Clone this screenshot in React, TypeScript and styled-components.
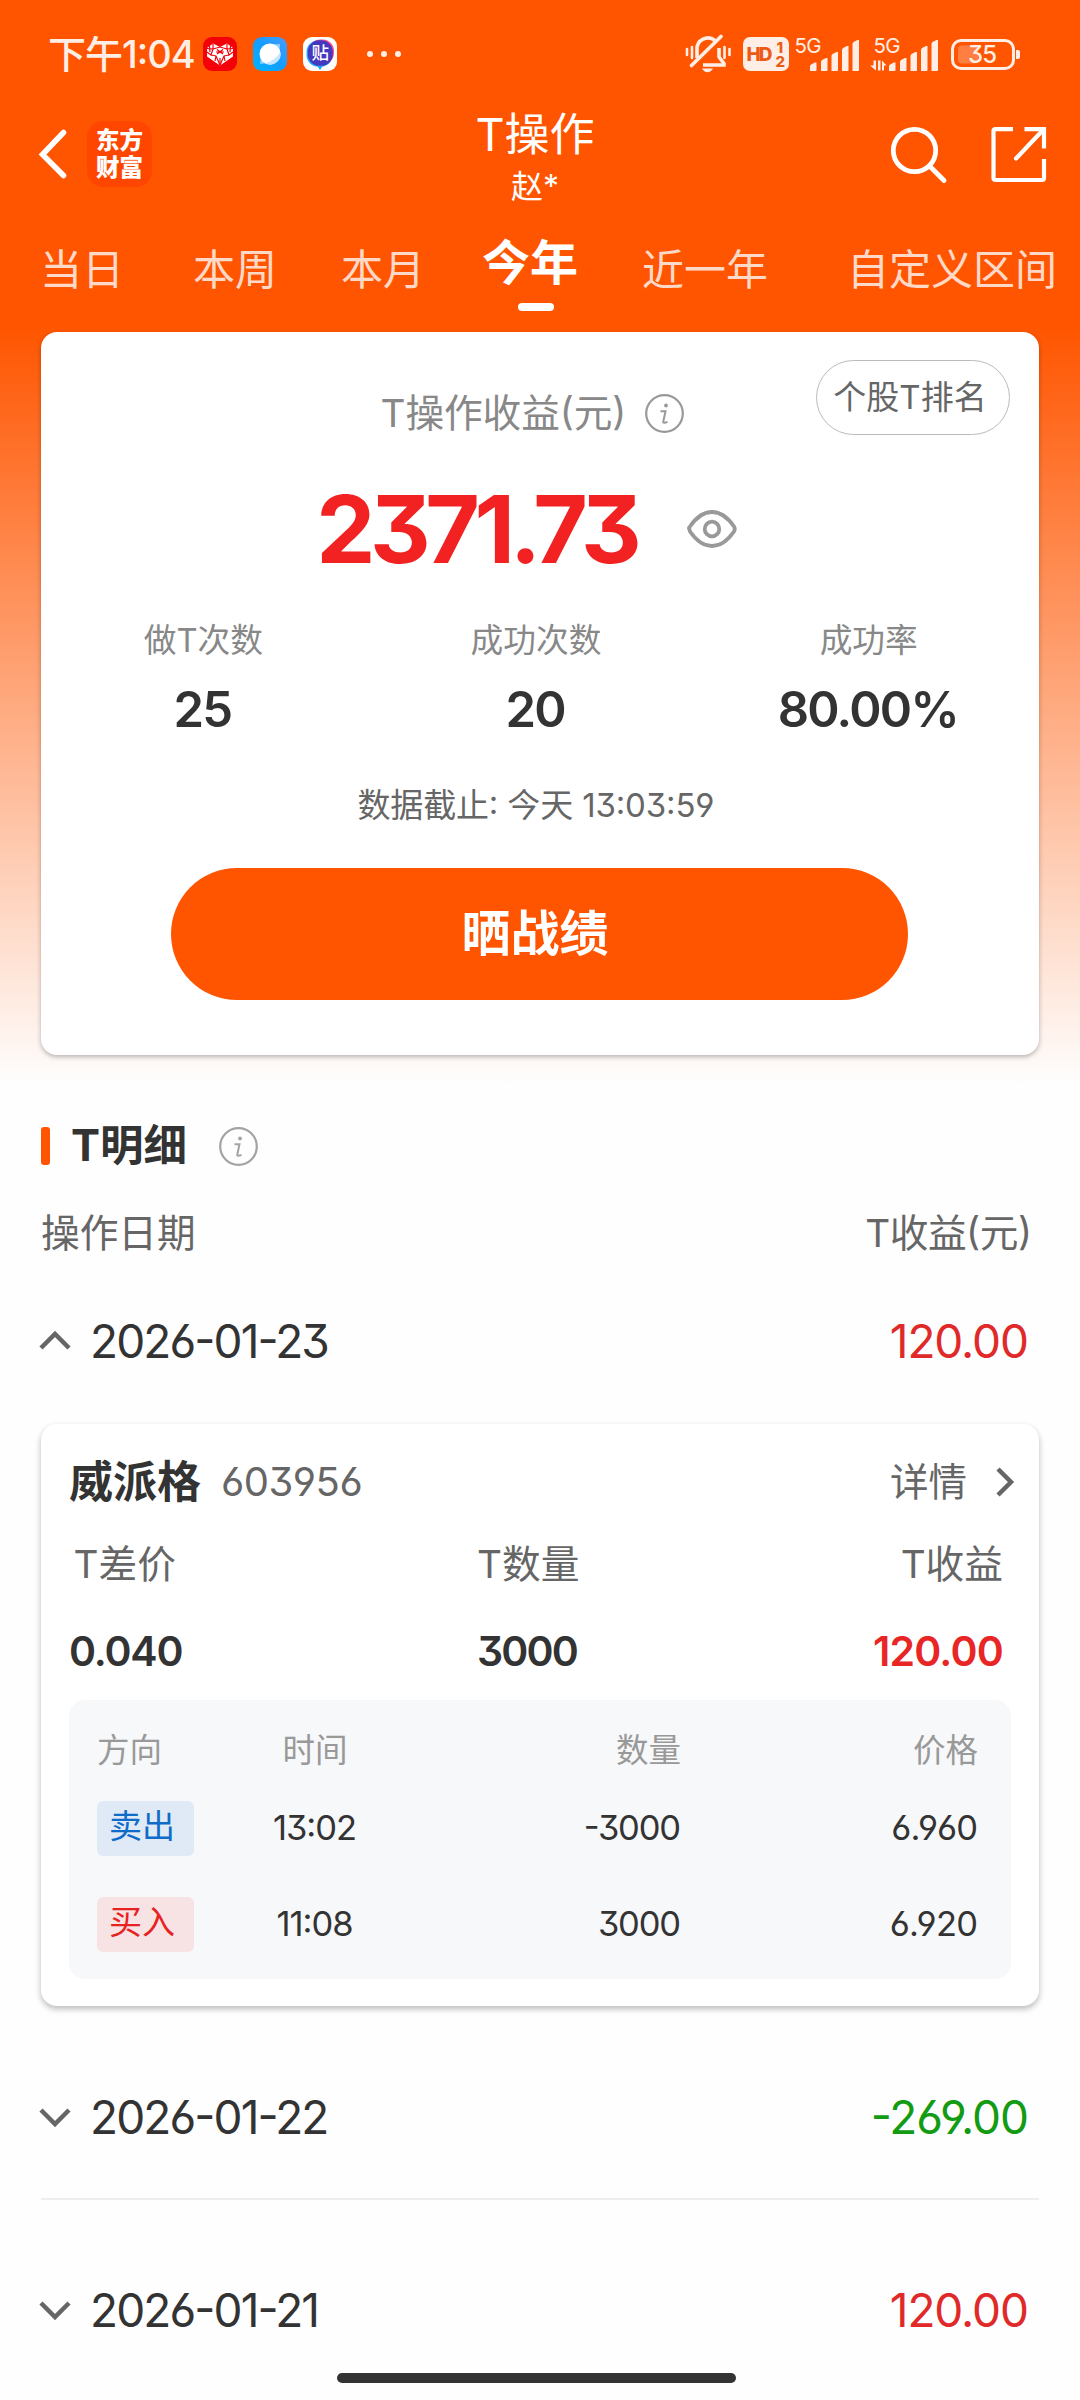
import React from 'react';
import styled, { createGlobalStyle } from 'styled-components';

const GlobalStyle = createGlobalStyle`
  *, *::before, *::after { box-sizing: border-box; }
  body {
    margin: 0;
    background: #fefefe;
    font-family: Inter, "Noto Sans CJK SC", sans-serif;
    font-feature-settings: "cv03", "cv04", "cv09", "case";
    color: #333;
  }
  svg { display: block; flex: none; overflow: visible; }
`;

const Page = styled.div`
  width: 1080px;
  height: 2400px;
  overflow: hidden;
  display: flex;
  flex-direction: column;
  background: linear-gradient(#ff5500 0, #ff5500 325px, #fefefe 1085px);
  & > * { flex-shrink: 0; }
`;

interface LabelProps {
  $size: number;
  $weight?: number;
  $color?: string;
  $track?: number;
}

const Label = styled.span<LabelProps>`
  font-size: ${p => p.$size}px;
  font-weight: ${p => p.$weight ?? 400};
  color: ${p => p.$color ?? 'inherit'};
  letter-spacing: ${p => p.$track ?? 0}px;
  margin-right: ${p => -(p.$track ?? 0)}px;
  line-height: 1;
  white-space: nowrap;
`;

/* ---------- status bar ---------- */

const StatusBar = styled.div`
  height: 108px;
  padding: 0 60px 0 48px;
  display: flex;
  align-items: center;
  justify-content: space-between;
`;

const StatusGroup = styled.div`
  display: flex;
  align-items: center;
`;

const AppIcons = styled.div`
  display: flex;
  align-items: center;
  gap: 16px;
  margin-left: 7px;
`;

const STATUS = '#ffeee5';

const ShoppingIcon = () => (
  <svg width="34" height="34" viewBox="0 0 34 34">
    <rect width="34" height="34" rx="9" fill="#f40009" />
    <path d="M4 11 10 6.5 17 10 24 6.5 30 11V19.500L17 28.500 4 19.500Z" fill="#fff" />
    <g stroke="#f40009" strokeWidth="1.2" fill="none">
      <path d="M4 11.500 10 12 10 7M10 12 17 10 24 12 24 7M24 12 30 11.500M10 12 8 18 4 15M24 12 26 18 30 15M8 18 13 19 17 28 21 19 26 18M13 19 12 24M21 19 22 24" />
      <path d="M14 12.500 20 17M20 12.500 14 17M13 15H21" />
      <path d="M17 21V28M6.500 9 7 15M27.500 9 27 15" />
    </g>
  </svg>
);

const BrowserIcon = () => (
  <svg width="34" height="34" viewBox="0 0 34 34">
    <defs>
      <linearGradient id="sky" x1="0" y1="1" x2="1" y2="0">
        <stop offset="0" stopColor="#00b4ff" />
        <stop offset="0.5" stopColor="#129dff" />
        <stop offset="1" stopColor="#4b9bff" />
      </linearGradient>
    </defs>
    <rect width="34" height="34" rx="9" fill="url(#sky)" />
    <path d="M20 7.500 27 7 26.500 14ZM8 20 7 27 14 26Z" fill="#8fd0ff" />
    <circle cx="17" cy="17" r="10.500" fill="#fff" />
    <path d="M27.300 14.500A10.500 10.500 0 0 1 12 26.200C18 25 25 20 27.300 14.500Z" fill="#c5e4ff" />
  </svg>
);

const ForumIcon = () => (
  <svg width="34" height="34" viewBox="0 0 34 34">
    <rect width="34" height="34" rx="9" fill="#fff" />
    <path d="M17 33 13 27H21Z" fill="#1d9cf5" />
    <rect x="3.500" y="3.500" width="26" height="26" rx="11.500" fill="#22b0fa" />
    <rect x="6" y="2.500" width="25" height="25" rx="11.500" fill="#ff4d8a" />
    <rect x="4.800" y="3.300" width="25" height="25.500" rx="11.500" fill="#4438c0" />
    <text x="17.300" y="22" textAnchor="middle" fontSize="17.500" fontWeight="500" fill="#fff" fontFamily="Noto Sans CJK SC, sans-serif">贴</text>
  </svg>
);

const MoreDots = styled.div`
  display: flex;
  gap: 8px;
  margin-left: 30px;
  &::before, &::after { content: ''; }
  &::before, &::after, & > i {
    width: 6px;
    height: 6px;
    border-radius: 50%;
    background: ${STATUS};
  }
`;

const MutedBell = () => (
  <svg width="46" height="40" viewBox="0 0 46 40" fill="none" stroke={STATUS} strokeWidth="3.200" strokeLinecap="round">
    <path d="M2 15V21M7 13V24M39.500 13V24M44.500 15V21" strokeWidth="2.600" />
    <path d="M12 24V15.500A11 11 0 0 1 30 6.500" strokeWidth="3.600" strokeLinecap="butt" />
    <path d="M34 14V23L39 29.500V31H18" strokeWidth="3.600" strokeLinecap="butt" />
    <path d="M36 2.500 6.500 31.500" strokeWidth="3.600" />
    <path d="M17 34.500H28Q26 38.200 22.500 38.200T17 34.500Z" fill={STATUS} stroke="none" />
  </svg>
);

const HdBadge = () => (
  <svg width="46" height="34" viewBox="0 0 46 34">
    <rect width="46" height="34" rx="7" fill={STATUS} />
    <g fill="#ec5a17" fontFamily="Inter, sans-serif" fontWeight="800">
      <text x="3.500" y="24" fontSize="19" textLength="26">HD</text>
      <text x="33.500" y="15.500" fontSize="15">1</text>
      <text x="32.500" y="30" fontSize="15">2</text>
    </g>
  </svg>
);

const Signal = ({ data }: { data?: boolean }) => (
  <svg width="66" height="36" viewBox="0 0 66 36" fill={STATUS}>
    <text x="-0.500" y="17" fontSize="20.500" letterSpacing="-0.700" fontFamily="Inter, sans-serif">5G</text>
    {[[15, 26.500], [26, 22], [36.500, 16], [47, 10], [57.500, 4]].map(([x, top]) => (
      <path key={x} d={`M${x} 35V${top + 4}Q${x} ${top + 2.5} ${x + 1.5} ${top + 1.8}L${x + 5} ${top}H${x + 6.5}V34Q${x + 6.5} 35 ${x + 5.5} 35Z`} />
    ))}
    {data && <path d="M-0.500 24.500H2V34.500L-4 29.500H-0.500ZM4 24.500H6.500V34.500H4ZM8 24.500 12.500 29.500H10V34.500H8Z" />}
  </svg>
);

const Battery = () => (
  <svg width="70" height="32" viewBox="0 0 70 32">
    <rect x="1.500" y="2.500" width="61" height="28" rx="8.500" fill="none" stroke={STATUS} strokeWidth="3" />
    <rect x="7" y="7.500" width="20" height="18" rx="4" fill="#ff7e42" />
    <path d="M65 12H67Q69 12 69 14V19Q69 21 67 21H65Z" fill={STATUS} />
    <text x="31" y="25" textAnchor="middle" fontSize="24" fontWeight="500" letterSpacing="-1" fill={STATUS} fontFamily="Inter, sans-serif">35</text>
  </svg>
);

const StatusIcons = styled.div`
  display: flex;
  align-items: center;
  width: 335px;
  & > :nth-child(2) { margin-left: 12px; }
  & > :nth-child(3) { margin-left: 6px; }
  & > :nth-child(4) { margin-left: 13px; }
  & > :nth-child(5) { margin-left: 11px; }
`;

/* ---------- header ---------- */

const Header = styled.header`
  height: 98px;
  display: grid;
  grid-template-columns: 437px 196px 1fr;
  align-items: center;
  color: #fff;
`;

const HeaderLeft = styled.div`
  display: flex;
  align-items: center;
  gap: 19px;
  padding: 0 0 6px 38px;
`;

const Brand = styled.div`
  width: 65px;
  height: 66px;
  border-radius: 16px;
  background: #ff4600;
  display: grid;
  place-content: center;
  font-size: 23.500px;
  line-height: 27.500px;
  font-weight: 900;
  text-align: center;
`;

const HeaderTitle = styled.div`
  display: flex;
  flex-direction: column;
  align-items: center;
  gap: 14px;
`;

const HolderName = styled(Label)`
  font-feature-settings: normal;
`;

const HeaderActions = styled.div`
  display: flex;
  justify-content: flex-end;
  align-items: center;
  gap: 44px;
  padding: 0 33px 6px 0;
`;

/* ---------- period tabs ---------- */

const Tabs = styled.nav`
  height: 120px;
  padding-left: 40px;
  display: flex;
  align-items: flex-start;
`;

const Tab = styled.div<{ $gap: number; $active?: boolean }>`
  margin-left: ${p => p.$gap}px;
  padding-top: ${p => (p.$active ? 33 : 43)}px;
  display: flex;
  flex-direction: column;
  align-items: center;
  font-size: ${p => (p.$active ? 48 : 42)}px;
  font-weight: ${p => (p.$active ? 600 : 400)};
  line-height: 1;
  white-space: nowrap;
  color: ${p => (p.$active ? '#fff' : '#ffd9c7')};
  &::after {
    content: '';
    display: ${p => (p.$active ? 'block' : 'none')};
    width: 36px;
    height: 8px;
    margin: 16px 0 0 11px;
    border-radius: 4px;
    background: #fff;
  }
`;

/* ---------- summary ---------- */

const Card = styled.section`
  margin: 0 41px;
  border-radius: 16px;
  background: #fff;
`;

const Summary = styled(Card)`
  margin-top: 6px;
  height: 723px;
  position: relative;
  display: flex;
  flex-direction: column;
  align-items: center;
  box-shadow: 0 2px 5px rgba(0, 0, 0, 0.28);
`;

const RankPill = styled.button`
  position: absolute;
  top: 28px;
  right: 29px;
  width: 194px;
  height: 75px;
  padding: 0 6px 0 0;
  border: 1px solid #bbb;
  border-radius: 38px;
  background: #fff;
  font: inherit;
  display: flex;
  align-items: center;
  justify-content: center;
`;

const SummaryTitle = styled.div`
  height: 40px;
  margin: 61px 15px 0 0;
  display: flex;
  align-items: center;
  gap: 19px;
`;

const Amount = styled.div`
  height: 96px;
  margin: 48px 27px 0 0;
  display: flex;
  align-items: center;
  gap: 45px;
`;

const Stats = styled.div`
  width: 998px;
  margin: 47px 8px 0 0;
  display: grid;
  grid-template-columns: repeat(3, 1fr);
`;

const Stat = styled.div`
  display: flex;
  flex-direction: column;
  align-items: center;
  gap: 28px;
`;

const Deadline = styled.div`
  height: 34px;
  margin: 55px 8px 0 0;
  display: flex;
  align-items: center;
`;

const ShareButton = styled.button`
  width: 737px;
  height: 132px;
  margin: 45px 2px 0 0;
  padding: 0 8px 0 0;
  border: 0;
  border-radius: 66px;
  background: #ff5500;
  font: inherit;
  display: flex;
  align-items: center;
  justify-content: center;
`;

/* ---------- detail list ---------- */

const SectionTitle = styled.div`
  height: 40px;
  margin: 71px 41px 0;
  display: flex;
  align-items: center;
  &::before {
    content: '';
    width: 9px;
    height: 38px;
    margin-right: 21px;
    border-radius: 3px;
    background: #ff5500;
  }
  svg { margin-left: 32px; }
`;

const ListHead = styled.div`
  height: 40px;
  margin: 47px 48px 0 41px;
  display: flex;
  align-items: center;
  justify-content: space-between;
`;

const DayRow = styled.div<{ $top: number; $bottom: number; $line?: boolean }>`
  margin: 0 41px;
  padding: ${p => p.$top}px 10px ${p => p.$bottom}px 0;
  display: flex;
  align-items: center;
  border-bottom: ${p => (p.$line ? '2px solid #eee' : '0')};
  svg { margin: 0 19px 0 -2px; }
`;

const Push = styled.span`
  margin-left: auto;
  display: flex;
  align-items: center;
`;

const StockCard = styled(Card)`
  height: 582px;
  padding: 36px 28px 26px;
  display: flex;
  flex-direction: column;
  box-shadow: 0 3px 6px rgba(0, 0, 0, 0.27);
`;

const StockHead = styled.div`
  height: 44px;
  display: flex;
  align-items: center;
  & > :nth-child(2) { margin-left: 20px; }
  svg { margin: 0 -4px 0 28px; }
`;

const Metrics = styled.div<{ $top: number; $indent?: number }>`
  height: 40px;
  margin-top: ${p => p.$top}px;
  display: grid;
  grid-template-columns: 408px auto 1fr;
  align-items: center;
  & > :first-child { margin-left: ${p => p.$indent ?? 0}px; }
  & > :last-child { justify-self: end; margin-right: 8px; }
`;

const Trades = styled.div`
  height: 279px;
  margin-top: 29px;
  border-radius: 16px;
  background: #f7f8fa;
  padding: 31px 33px 0 28px;
`;

const TradeRow = styled.div<{ $height: number }>`
  height: ${p => p.$height}px;
  display: grid;
  grid-template-columns: 150px 136px 298px 1fr;
  align-items: center;
  & > :nth-child(2) { justify-self: center; }
  & > :nth-child(n + 3) { justify-self: end; }
`;

const SideTag = styled.div<{ $sell?: boolean }>`
  width: 97px;
  height: 55px;
  padding: 0 7px 4px 0;
  border-radius: 6px;
  display: flex;
  align-items: center;
  justify-content: center;
  font-size: 33px;
  line-height: 1;
  background: ${p => (p.$sell ? '#dfeaf6' : '#f8e3e4')};
  color: ${p => (p.$sell ? '#0f6cc9' : '#e62222')};
`;

const HomeIndicator = styled.div`
  width: 399px;
  height: 10px;
  margin: auto 0 17px 337px;
  border-radius: 5px;
  background: #333;
`;

const InfoIcon = ({ color }: { color: string }) => (
  <svg width="39" height="39" viewBox="0 0 39 39" fill="none" stroke={color}>
    <circle cx="19.500" cy="19.500" r="18.300" strokeWidth="2.200" />
    <circle cx="21" cy="11.500" r="1.900" fill={color} stroke="none" />
    <path d="M15.500 17.200H20.500L18.300 27.500Q18 29 19.500 28.700L22.500 28" strokeWidth="2" />
  </svg>
);

const Chevron = ({ up }: { up?: boolean }) => (
  <svg width="32" height="20" viewBox="0 0 32 20" fill="none" stroke="#666" strokeWidth="4.500">
    <path d={up ? 'M2 17 16 3 30 17' : 'M2 3 16 17 30 3'} />
  </svg>
);

const tabs: { name: string; gap: number; active?: boolean }[] = [
  { name: '当日', gap: 0 },
  { name: '本周', gap: 69 },
  { name: '本月', gap: 64 },
  { name: '今年', gap: 57, active: true },
  { name: '近一年', gap: 64 },
  { name: '自定义区间', gap: 79 },
];

const stats = [
  ['做T次数', '25'],
  ['成功次数', '20'],
  ['成功率', '80.00%'],
];

const trades = [
  { side: '卖出', sell: true, time: '13:02', amount: '-3000', price: '6.960' },
  { side: '买入', sell: false, time: '11:08', amount: '3000', price: '6.920' },
];

interface DayProps {
  date: string;
  value: string;
  color: string;
  top: number;
  bottom: number;
  up?: boolean;
  line?: boolean;
}

const Day = ({ date, value, color, top, bottom, up, line }: DayProps) => (
  <DayRow $top={top} $bottom={bottom} $line={line}>
    <Chevron up={up} />
    <Label $size={46} $track={-1.9}>{date}</Label>
    <Push><Label $size={46} $color={color} $track={-1.1}>{value}</Label></Push>
  </DayRow>
);

export default function App() {
  return (
    <>
      <GlobalStyle />
      <Page>
        <StatusBar>
          <StatusGroup>
            <Label $size={38} $weight={500} $color={STATUS} $track={-1}>下午1:04</Label>
            <AppIcons>
              <ShoppingIcon />
              <BrowserIcon />
              <ForumIcon />
            </AppIcons>
            <MoreDots><i /></MoreDots>
          </StatusGroup>
          <StatusIcons>
            <MutedBell />
            <HdBadge />
            <Signal />
            <Signal data />
            <Battery />
          </StatusIcons>
        </StatusBar>

        <Header>
          <HeaderLeft>
            <svg width="30" height="50" viewBox="0 0 30 50" fill="none" stroke="#fff" strokeWidth="5.500" strokeLinecap="round">
              <path d="M25.500 3.500 4.500 25.500 25.500 46.500" />
            </svg>
            <Brand>东方<br />财富</Brand>
          </HeaderLeft>
          <HeaderTitle>
            <Label $size={45}>T操作</Label>
            <HolderName $size={32}>赵*</HolderName>
          </HeaderTitle>
          <HeaderActions>
            <svg width="57" height="57" viewBox="0 0 57 57" fill="none" stroke="#fff" strokeWidth="4.800" strokeLinecap="round">
              <circle cx="24.500" cy="24.500" r="21.200" />
              <path d="M40 40.500 54 54.500" />
            </svg>
            <svg width="56" height="57" viewBox="0 0 56 57" fill="none" stroke="#fff" strokeWidth="4.200">
              <path d="M22 3.100H4.500Q2.500 3.100 2.500 5.100V52Q2.500 54 4.500 54H51Q53 54 53 52V33" />
              <path d="M33.500 3.100H53V22.500" />
              <path d="M52.500 3.500 25 32.500" strokeLinecap="round" />
            </svg>
          </HeaderActions>
        </Header>

        <Tabs>
          {tabs.map(t => <Tab key={t.name} $gap={t.gap} $active={t.active}>{t.name}</Tab>)}
        </Tabs>

        <Summary>
          <RankPill><Label $size={33} $color="#666">个股T排名</Label></RankPill>
          <SummaryTitle>
            <Label $size={38.7} $color="#888" $track={-0.1}>T操作收益(元)</Label>
            <InfoIcon color="#999" />
          </SummaryTitle>
          <Amount>
            <Label $size={94} $weight={650} $color="#f22223" $track={-5.4}>2371.73</Label>
            <svg width="50" height="38" viewBox="0 0 50 38" fill="none" stroke="#999" strokeWidth="3.800">
              <path d="M2.300 19Q1.500 18 3 16.500Q13 2 25 2T47 16.500Q48.500 19 47 21.500Q37 36 25 36T3 21.500Z" />
              <circle cx="25" cy="19" r="7.300" />
            </svg>
          </Amount>
          <Stats>
            {stats.map(([name, value]) => (
              <Stat key={name}>
                <Label $size={32.7} $color="#888">{name}</Label>
                <Label $size={49} $weight={600} $track={-1.7}>{value}</Label>
              </Stat>
            ))}
          </Stats>
          <Deadline><Label $size={33} $color="#666" $track={-0.15}>数据截止: 今天 13:03:59</Label></Deadline>
          <ShareButton><Label $size={49} $weight={700} $color="#fff">晒战绩</Label></ShareButton>
        </Summary>

        <SectionTitle>
          <Label $size={43.5} $weight={700}>T明细</Label>
          <InfoIcon color="#a3a3a3" />
        </SectionTitle>
        <ListHead>
          <Label $size={38.7} $color="#666">操作日期</Label>
          <Label $size={38.7} $color="#666" $track={-0.5}>T收益(元)</Label>
        </ListHead>

        <Day date="2026-01-23" value="120.00" color="#e02a2a" top={65} bottom={60} up />
        <StockCard>
          <StockHead>
            <Label $size={44} $weight={700}>威派格</Label>
            <Label $size={40} $color="#666" $track={-0.5}>603956</Label>
            <Push>
              <Label $size={38.5} $color="#666">详情</Label>
              <svg width="20" height="30" viewBox="0 0 20 30" fill="none" stroke="#666" strokeWidth="4.500">
                <path d="M3 2 16 15 3 28" />
              </svg>
            </Push>
          </StockHead>
          <Metrics $top={40} $indent={4.5}>
            <Label $size={38.7} $color="#666">T差价</Label>
            <Label $size={38.7} $color="#666">T数量</Label>
            <Label $size={38.7} $color="#666">T收益</Label>
          </Metrics>
          <Metrics $top={47}>
            <Label $size={41} $weight={600} $track={-1.2}>0.040</Label>
            <Label $size={41} $weight={600} $track={-1.8}>3000</Label>
            <Label $size={41} $weight={600} $color="#e82626" $track={-0.8}>120.00</Label>
          </Metrics>
          <Trades>
            <TradeRow $height={40}>
              {['方向', '时间', '数量', '价格'].map(h => <Label key={h} $size={32.5} $color="#999">{h}</Label>)}
            </TradeRow>
            {trades.map(t => (
              <TradeRow key={t.time} $height={t.sell ? 114 : 78}>
                <SideTag $sell={t.sell}>{t.side}</SideTag>
                <Label $size={34.5} $track={-1}>{t.time}</Label>
                <Label $size={34.5} $track={-1.2}>{t.amount}</Label>
                <Label $size={34.5} $track={-0.7}>{t.price}</Label>
              </TradeRow>
            ))}
          </Trades>
        </StockCard>
        <Day date="2026-01-22" value="-269.00" color="#139b13" top={88} bottom={58} line />
        <Day date="2026-01-21" value="120.00" color="#e02a2a" top={87} bottom={10} />
        <HomeIndicator />
      </Page>
    </>
  );
}
